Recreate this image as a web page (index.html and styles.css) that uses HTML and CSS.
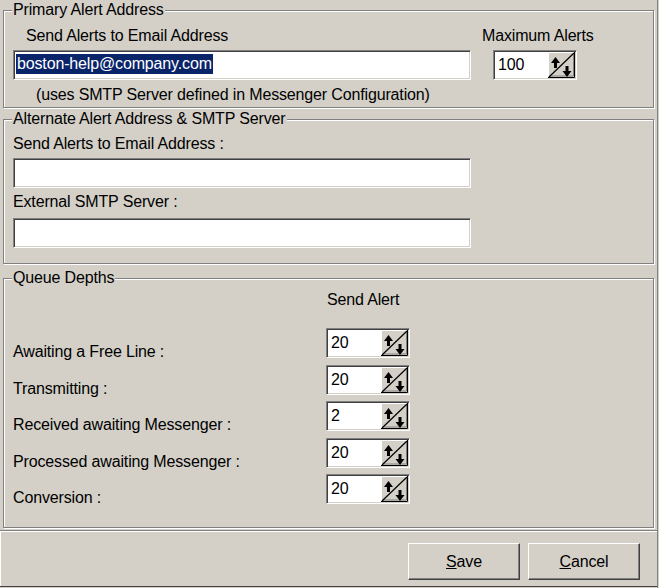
FILE: index.html
```html
<!DOCTYPE html>
<html lang="en">
<head>
  <meta charset="UTF-8" />
  <title>Alert Settings</title>
  <link rel="stylesheet" href="styles.css">
</head>
<body>
  <div class="window">

    <fieldset class="group group-primary">
      <legend>Primary Alert Address</legend>
      <div class="primary-grid">
        <div class="primary-left">
          <div class="label label-indent">Send Alerts to Email Address</div>
          <div class="textbox"><span class="selected">boston-help@company.com</span></div>
          <div class="note">(uses SMTP Server defined in Messenger Configuration)</div>
        </div>
        <div class="primary-right">
          <div class="label">Maximum Alerts</div>
          <div class="spin spin-max">
            <span class="spin-value">100</span>
            <svg class="spin-btn" viewBox="0 0 27 26"><use href="#spinner" /></svg>
          </div>
        </div>
      </div>
    </fieldset>

    <fieldset class="group group-alt">
      <legend>Alternate Alert Address &amp; SMTP Server</legend>
      <div class="label">Send Alerts to Email Address :</div>
      <div class="textbox textbox-wide"></div>
      <div class="label label-gap">External SMTP Server :</div>
      <div class="textbox textbox-wide textbox-last"></div>
    </fieldset>

    <fieldset class="group group-queue">
      <legend>Queue Depths</legend>
      <div class="queue-grid">
        <div class="label queue-head">Send Alert</div>

        <div class="label queue-label">Awaiting a Free Line :</div>
        <div class="spin"><span class="spin-value">20</span><svg class="spin-btn" viewBox="0 0 27 26"><use href="#spinner" /></svg></div>

        <div class="label queue-label">Transmitting :</div>
        <div class="spin"><span class="spin-value">20</span><svg class="spin-btn" viewBox="0 0 27 26"><use href="#spinner" /></svg></div>

        <div class="label queue-label">Received awaiting Messenger :</div>
        <div class="spin"><span class="spin-value">2</span><svg class="spin-btn" viewBox="0 0 27 26"><use href="#spinner" /></svg></div>

        <div class="label queue-label">Processed awaiting Messenger :</div>
        <div class="spin"><span class="spin-value">20</span><svg class="spin-btn" viewBox="0 0 27 26"><use href="#spinner" /></svg></div>

        <div class="label queue-label">Conversion :</div>
        <div class="spin"><span class="spin-value">20</span><svg class="spin-btn" viewBox="0 0 27 26"><use href="#spinner" /></svg></div>
      </div>
    </fieldset>

    <div class="button-bar">
      <button class="btn"><u>S</u>ave</button>
      <button class="btn"><u>C</u>ancel</button>
    </div>
  </div>

  <!-- spin button shared by every numeric box -->
  <svg class="defs" width="0" height="0">
    <defs>
      <g id="spinner">
        <rect x="0" y="0" width="27" height="26" fill="#d4d0c8" />
        <path d="M0.5 25 V0.5 H26" fill="none" stroke="#fff" />
        <path d="M0 25.5 H26.5 V0" fill="none" stroke="#000" />
        <path d="M1.5 24 H25.5 V1" fill="none" stroke="#808080" />
        <path d="M1 25 L26 1" fill="none" stroke="#000" stroke-width="1.2" />
        <polygon points="3,11 7.5,5 12,11" fill="#000" />
        <rect x="6" y="10" width="3" height="6" fill="#000" />
        <rect x="17.5" y="14" width="3" height="6" fill="#000" />
        <polygon points="14.5,19 19,25 23.5,19" fill="#000" />
      </g>
    </defs>
  </svg>
</body>
</html>
```

FILE: styles.css
```css
body {
  margin: 0;
  background: #d4d0c8;
  font-family: 'Liberation Sans', Arial, sans-serif;
  font-size: 16px;
  letter-spacing: -0.15px;
  color: #000;
}

.window {
  width: 658px;
  height: 588px;
  box-sizing: border-box;
  border-right: 1px solid #808080;
  display: flex;
  flex-direction: column;
}

/* Group boxes */
.group {
  margin: 0 3px;
  padding: 0 9px;
  min-width: 0;
  border: 1px solid #808080;
  box-shadow: inset 1px 1px #fff, 1px 1px #fff;
}

.group legend {
  padding: 0 1px;
  margin-left: -1px;
  line-height: 18px;
  background: #d4d0c8;
}

.group-primary {
  margin-top: 1px;
  padding-top: 8px;
  padding-bottom: 3px;
}

.group-alt {
  margin-top: 2px;
  padding-top: 7px;
  padding-bottom: 15px;
}

.group-queue {
  margin-top: 5px;
  padding-top: 4px;
  padding-bottom: 23px;
}

.label {
  line-height: 18px;
  white-space: nowrap;
}

.label-indent {
  margin-left: 13px;
}

.label-gap {
  margin-top: 5px;
}

/* Text boxes */
.textbox {
  height: 30px;
  box-sizing: border-box;
  margin-top: 5px;
  padding: 3px 2px;
  background: #fff;
  border: 1px solid;
  border-color: #808080 #fff #fff #808080;
  box-shadow: inset 1px 1px #404040, inset -1px -1px #d4d0c8;
}

.textbox-wide {
  width: 458px;
}

.textbox-last {
  margin-top: 7px;
}

.selected {
  display: inline-block;
  line-height: 20px;
  padding: 0 1px;
  background: #0a246a;
  color: #fff;
}

.note {
  margin: 6px 0 0 23px;
  line-height: 18px;
  white-space: nowrap;
}

.primary-grid {
  display: grid;
  grid-template-columns: 458px auto;
  column-gap: 11px;
}

.spin-max {
  margin: 5px 0 0 11px;
  width: 85px;
}

/* Spin boxes */
.spin {
  display: flex;
  width: 84px;
  height: 30px;
  box-sizing: border-box;
  background: #fff;
  border: 1px solid;
  border-color: #808080 #fff #fff #808080;
  box-shadow: inset 1px 1px #404040, inset -1px -1px #d4d0c8;
  padding: 1px;
}

.spin-value {
  flex: 1;
  padding-left: 3px;
  line-height: 26px;
}

.spin-btn {
  width: 27px;
  height: 26px;
  display: block;
}

.defs {
  position: absolute;
}

/* Queue depths */
.queue-grid {
  display: grid;
  grid-template-columns: 313px 84px;
  grid-template-rows: auto repeat(5, 30px);
  row-gap: 6.5px;
  align-items: end;
}

.queue-head {
  grid-column: 2;
  margin: 0 0 12.5px 1px;
}

.queue-label {
  margin-bottom: -3px;
}

/* Bottom buttons */
.button-bar {
  margin-top: 2px;
  border-top: 1px solid #808080;
  border-bottom: 1px solid #404040;
  box-shadow: inset 0 1px #fff, inset 1px 0 #fff;
  padding: 12px 17px 6px 0;
  display: flex;
  justify-content: flex-end;
  gap: 8px;
}

.btn {
  width: 112px;
  height: 37px;
  font-family: inherit;
  font-size: 16px;
  letter-spacing: -0.15px;
  color: #000;
  background: #d4d0c8;
  border: 1px solid;
  border-color: #fff #404040 #404040 #fff;
  box-shadow: inset -1px -1px #808080;
  padding: 0;
}
```
